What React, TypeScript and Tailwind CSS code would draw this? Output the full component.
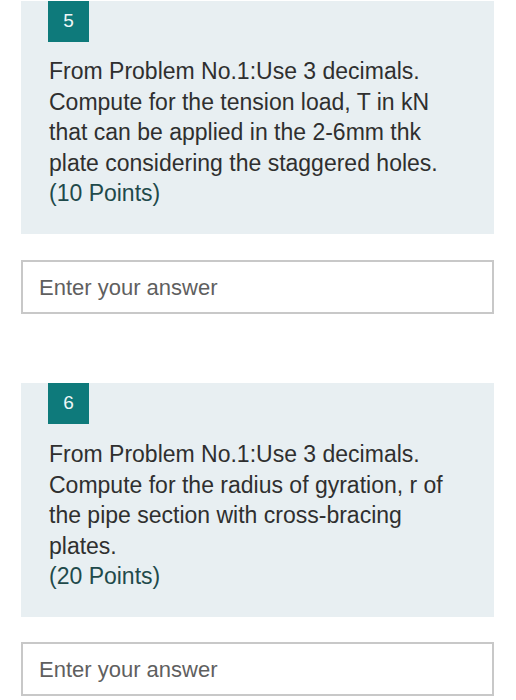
import React from "react";

function Question({ num, lines, points, gapTop }: { num: string; lines: string[]; points: string; gapTop: string }) {
  return (
    <div className="bg-[#e8eff2] pb-[25.5px]">
      <div className="ml-[27px] flex h-[41px] w-[41px] items-center justify-center bg-[#0e7a7b] text-[19px] text-[#eef7f7]">
        {num}
      </div>
      <div className={`${gapTop} pl-[28px] pr-[24px] text-[23px] leading-[30.5px] text-[#2f2f2f]`}>
        {lines.map((l, i) => (
          <div key={i}>{l}</div>
        ))}
        <div className="text-[#1f4a4b]">{points}</div>
      </div>
    </div>
  );
}

function Answer() {
  return (
    <div className="flex h-[54px] items-center border-2 border-[#c8c8c8] bg-white pl-[16px] text-[22px] text-[#5f5f5f]">
      Enter your answer
    </div>
  );
}

export default function App() {
  return (
    <div
      className="min-h-[700px] bg-white pl-[21px] pr-[22px] pt-[1px]"
      style={{ fontFamily: '"Liberation Sans", Arial, sans-serif' }}
    >
      <Question
        num="5"
        gapTop="mt-[14px]"
        lines={[
          "From Problem No.1:Use 3 decimals.",
          "Compute for the tension load, T in kN",
          "that can be applied in the 2-6mm thk",
          "plate considering the staggered holes.",
        ]}
        points="(10 Points)"
      />
      <div className="mt-[26px]">
        <Answer />
      </div>
      <div className="mt-[69px]">
        <Question
          num="6"
          gapTop="mt-[15px]"
          lines={[
            "From Problem No.1:Use 3 decimals.",
            "Compute for the radius of gyration, r of",
            "the pipe section with cross-bracing",
            "plates.",
          ]}
          points="(20 Points)"
        />
      </div>
      <div className="mt-[25px]">
        <Answer />
      </div>
    </div>
  );
}
